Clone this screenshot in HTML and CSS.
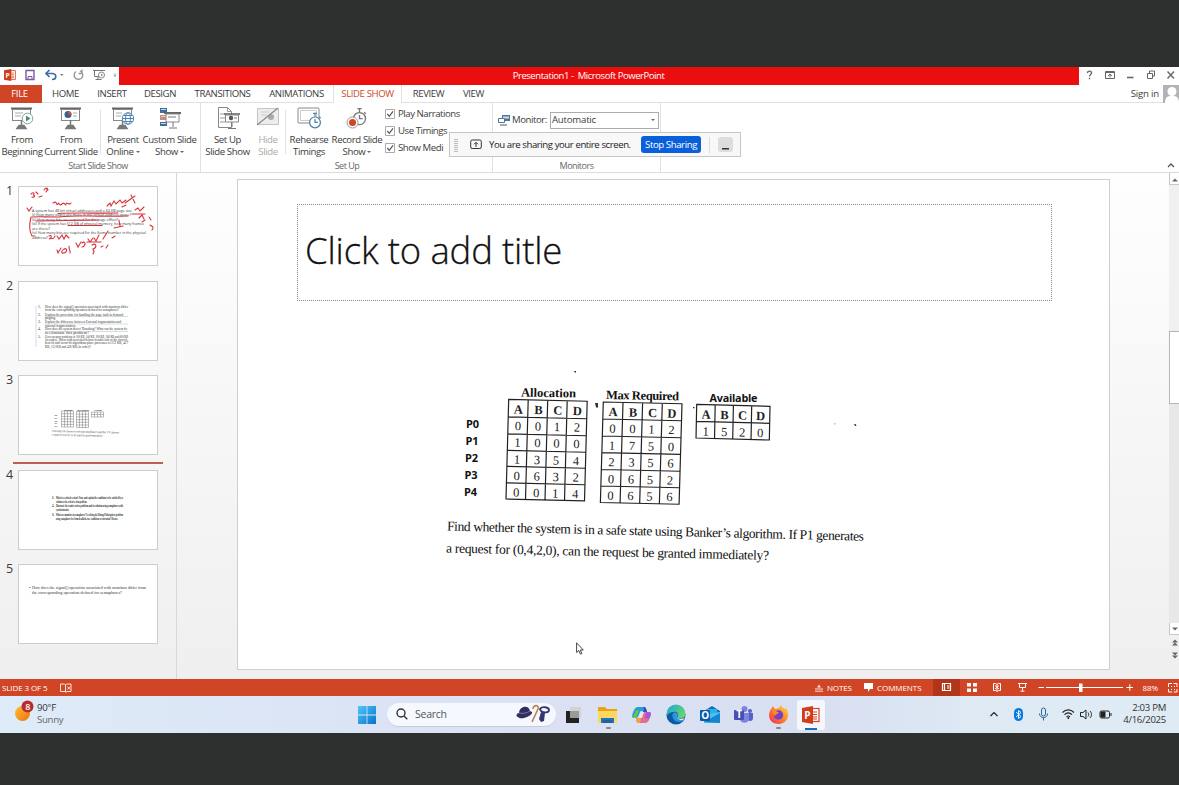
FILE: index.html
```html
<!DOCTYPE html>
<html lang="en">
<head>
<meta charset="utf-8">
<title>Presentation1 - Microsoft PowerPoint</title>
<link rel="stylesheet" href="styles.css">
</head>
<body>
<svg class="defs" width="0" height="0">
  <defs>
    <symbol id="board" viewBox="0 0 24 24">
      <path d="M1 2.5h21" stroke="#666" stroke-width="2"/><rect x="2.5" y="3.5" width="18" height="11" fill="#fff" stroke="#888"/>
      <path d="M11.500 14v7M7 22.500l2-3h5l2 3z" stroke="#777" stroke-width="1.500" fill="#777"/>
    </symbol>
    <symbol id="watch" viewBox="0 0 14 18">
      <circle cx="7" cy="11" r="5.700" fill="#fff" stroke="currentColor" stroke-width="1.300"/><path d="M5 1.500h4M7 1v4M7 7.500V11h3M11.500 5l1.500 1.500" stroke="currentColor" stroke-width="1.300" fill="none"/>
    </symbol>
    <symbol id="ppt" viewBox="0 0 18 18">
      <rect x="9" y="2.500" width="8" height="13" fill="#fff" stroke="#d14424" stroke-width="1.200"/><path d="M11 6h4M11 8.500h4M11 11h4M11 13h4" stroke="#d14424"/><path d="M0 2 11 0v18L0 16z" fill="#d03c1c"/>
      <text x="2.200" y="12.800" class="icon-letter">P</text>
    </symbol>
  </defs>
</svg>
<div class="window">
  <header class="titlebar">
    <div class="qat">
      <svg width="119" height="18" viewBox="0 0 119 18" fill="none">
        <use href="#ppt" x="4" y="2" width="12" height="12"/>
        <path d="M26 3.500h8v9h-8z" stroke="#7b5aa6" stroke-width="1.400"/><path d="M28 12.500v-3h4v3" stroke="#7b5aa6"/>
        <path d="M46 6.500h6c5 0 5 6 0 6M49.500 3l-3.500 3.500 3.500 3.500" stroke="#3b6fa8" stroke-width="1.700"/><path d="M60 7h3.500l-1.700 2z" fill="#777"/>
        <path d="M80 4a4.300 4.300 0 1 1-4 .5M82 2.500v4h-3.500" stroke="#999" stroke-width="1.400"/>
        <path d="M93 3.500h12M94.500 4v5.500h5M98 10v2.500M95.500 12.500h6" stroke="#777"/><circle cx="101.500" cy="8" r="3" fill="#fff" stroke="#888"/><path d="M101 6.500l2 1.500-2 1.500z" fill="#888"/>
        <path d="M113.500 7h3M114 8.500h2l-1 1.500z" stroke="#999" stroke-width=".7"/>
      </svg>
    </div>
    <h1 class="caption">Presentation1 -&nbsp; Microsoft PowerPoint</h1>
    <div class="controls">
      <svg width="100" height="18" viewBox="0 0 100 18" fill="none" stroke="#666">
        <path d="M8.500 6c0-2.500 4-2.500 4 0 0 1.500-2 1.500-2 3.500M10.500 10.800v1.500" stroke-width="1.400"/>
        <path d="M26.500 4.500h9v7h-9zM27 5.500h8M31 10.500V7M29 9l2-2 2 2"/>
        <path d="M48 10.500h6.500" stroke-width="1.600"/>
        <path d="M68.500 6.500h5v5h-5zM70.500 6V4h5v5H74"/>
        <path d="M88.500 4.500l6.500 7M95 4.500l-6.500 7" stroke-width="1.400"/>
      </svg>
    </div>
  </header>
  <nav class="tabs">
    <span class="tab file">FILE</span><span class="tab home">HOME</span><span class="tab insert">INSERT</span><span class="tab design">DESIGN</span><span class="tab trans">TRANSITIONS</span><span class="tab anim">ANIMATIONS</span><span class="tab active">SLIDE SHOW</span><span class="tab review">REVIEW</span><span class="tab view">VIEW</span>
    <span class="signin">Sign in</span>
    <svg width="16" height="18" viewBox="0 0 16 18"><rect width="16" height="18" fill="#b3b3b3"/><circle cx="9" cy="6.500" r="4.500" fill="#fff"/><path d="M2 18c0-5 2-6.500 5-7h4c3 .5 5 2 5 7z" fill="#fff"/></svg>
  </nav>
  <section class="ribbon">
    <div class="group start">
      <div class="tools">
        <div class="tool w45"><svg width="24" height="24" viewBox="0 0 24 24"><use href="#board"/><path d="M5 7h8M5 10h6" stroke="#aaa"/><circle cx="17.500" cy="12.500" r="5.300" fill="#fff" stroke="#7aa39b"/><path d="M16 9.500l4.500 3-4.500 3z" fill="#4b8a75"/></svg><span>From<br>Beginning</span></div>
        <div class="tool w54"><svg width="24" height="24" viewBox="0 0 24 24"><use href="#board"/><circle cx="9" cy="8.500" r="3.500" fill="#366092"/><path d="M9 8.500V5a3.500 3.500 0 0 1 3.500 3.500z" fill="#d35230"/><path d="M14 7h4M14 10h4" stroke="#aaa"/></svg><span>From<br>Current Slide</span></div>
        <i class="rule"></i>
        <div class="tool w38"><svg width="24" height="24" viewBox="0 0 24 24"><use href="#board"/><path d="M5 7h6M5 10h5" stroke="#aaa"/><g fill="#fff" stroke="#4d7fb3"><circle cx="17" cy="12.500" r="5.700"/><ellipse cx="17" cy="12.500" rx="2.500" ry="5.700"/><path d="M11.500 12.500h11M12.500 9.500h9M12.500 15.500h9" fill="none"/></g></svg><span>Present<br>Online <b class="caret"></b></span></div>
        <div class="tool w55"><svg width="24" height="24" viewBox="0 0 24 24"><path d="M2 2h7v5H2zM2 16h7v4H2z" fill="#3d6c9e"/><path d="M2 9h7v5H2z" fill="#c58b76"/><path d="M3 3.500h5M3 10.500h5M3 17.500h5" stroke="#cbd7e4"/><path d="M6 7h17" stroke="#666" stroke-width="2"/><path d="M8 8h13v8H8z" fill="#fff" stroke="#888"/><path d="M10 11h8M15 16v5M11 22h8" stroke="#777"/></svg><span>Custom Slide<br>Show <b class="caret"></b></span></div>
      </div>
      <div class="group-label">Start Slide Show</div>
    </div>
    <div class="group setup">
      <div class="tools">
        <div class="tool w52"><svg width="24" height="24" viewBox="0 0 24 24" fill="none"><path d="M2.500 1.500h9l4 4v16h-13z" fill="#fff" stroke="#888"/><path d="M11.500 1.500v4h4M4 8h5M4 12h5M4 16h5" stroke="#999"/><path d="M8 8h16" stroke="#666" stroke-width="1.600"/><path d="M9.500 9h13v7h-13z" fill="#fff" stroke="#888"/><circle cx="15" cy="12" r="2.200" fill="#555"/><path d="M18 12h3M16 16v5M12 22.500h8" stroke="#777"/></svg><span>Set Up<br>Slide Show</span></div>
        <div class="tool w29 off"><svg width="24" height="24" viewBox="0 0 24 24"><path d="M1.500 2.500h21v16h-21z" fill="#ededed" stroke="#c4c4c4"/><path d="M5 6h8M5 9h6" stroke="#ccc"/><circle cx="15" cy="11" r="3" fill="#aaa"/><path d="M1 19 22 2" stroke="#888" stroke-width="1.200"/></svg><span>Hide<br>Slide</span></div>
        <i class="rule"></i>
        <div class="tool w42"><svg width="24" height="24" viewBox="0 0 24 24"><rect x="1" y="2" width="21" height="15" rx="1" fill="#fff" stroke="#888"/><path d="M3.500 4.500h16v10h-16z" fill="none" stroke="#ccc"/><use href="#watch" x="11" y="6" width="14" height="17" class="blue"/></svg><span>Rehearse<br>Timings</span></div>
        <div class="tool w54"><svg width="24" height="24" viewBox="0 0 24 24"><use href="#watch" x="6" y="1" width="17" height="19" class="grey"/><circle cx="7.500" cy="16.500" r="5.500" fill="#fff" stroke="#999"/><circle cx="7.500" cy="16.500" r="3.500" fill="#cf4526"/></svg><span>Record Slide<br>Show <b class="caret"></b></span></div>
        <div class="checks">
          <label><svg width="10" height="10" viewBox="0 0 10 10"><path d="M.5.5h9v9h-9z" fill="#fff" stroke="#aaa"/><path d="M2.300 5l2 2.300 3.700-5" fill="none" stroke="#555" stroke-width="1.200"/></svg>Play Narrations</label>
          <label><svg width="10" height="10" viewBox="0 0 10 10"><path d="M.5.5h9v9h-9z" fill="#fff" stroke="#aaa"/><path d="M2.300 5l2 2.300 3.700-5" fill="none" stroke="#555" stroke-width="1.200"/></svg>Use Timings</label>
          <label><svg width="10" height="10" viewBox="0 0 10 10"><path d="M.5.5h9v9h-9z" fill="#fff" stroke="#aaa"/><path d="M2.300 5l2 2.300 3.700-5" fill="none" stroke="#555" stroke-width="1.200"/></svg>Show Medi</label>
        </div>
      </div>
      <div class="group-label">Set Up</div>
    </div>
    <div class="group monitors">
      <div class="monitor-row">
        <svg width="12" height="12" viewBox="0 0 12 12"><path d="M4 1h8v6H4z" fill="#54759b"/><path d="M5 2.500h6v2H5z" fill="#d5deea"/><path d="M.5 4.500h6v4h-6z" fill="#fff" stroke="#54759b"/><path d="M2 11h7" stroke="#555"/></svg>
        <span class="monitor-label">Monitor:</span><span class="select">Automatic<b class="caret"></b></span>
      </div>
      <div class="group-label">Monitors</div>
    </div>
    <svg class="collapse" width="8" height="6" viewBox="0 0 8 6"><path d="M1 5l3-3 3 3" fill="none" stroke="#555" stroke-width="1.300"/></svg>
  </section>
  <div class="share">
    <i class="grip"></i>
    <svg width="12" height="11" viewBox="0 0 12 11" fill="none" stroke="#333"><rect x=".7" y="1" width="10.600" height="8.500" rx="1.500"/><path d="M6 8V3.500M4 5.300l2-2 2 2"/></svg>
    <span class="share-text">You are sharing your entire screen.</span>
    <span class="stop">Stop Sharing</span>
    <i class="share-rule"></i>
    <span class="share-min"></span>
  </div>
  <main class="work">
    <aside class="thumbs">
      <div class="thumb"><b>1</b>
        <svg viewBox="0 0 140 80" width="140" height="80"><g class="tiny sans"><text x="14" y="25.500" textLength="100" lengthAdjust="spacingAndGlyphs">A system has 48-bit virtual addresses and a 64-KB page size</text><text x="14" y="30" textLength="99" lengthAdjust="spacingAndGlyphs">(i) How many pages are there in the virtual address space?</text><text x="14" y="34.500" textLength="86" lengthAdjust="spacingAndGlyphs">(ii) How many bits are required for the page offset?</text><text x="14" y="39" textLength="112" lengthAdjust="spacingAndGlyphs">(iii) If the system has 512 GB of physical memory, how many frames</text><text x="14" y="43.500" textLength="18" lengthAdjust="spacingAndGlyphs">are there?</text><text x="14" y="48" textLength="114" lengthAdjust="spacingAndGlyphs">(iv) How many bits are required for the frame number in the physical</text><text x="14" y="52.500" textLength="16" lengthAdjust="spacingAndGlyphs">address?</text></g>
        <g class="ink"><path d="M13 8c3-3 4 0 2 1 3 0 1 3-1 2M18 6l2 2M21 11l3-1M26 4c3-4 4 0 2 2M29 2l1 2M35 17c5-3 2 3 5 1 1-3 1 3 4 0s3 3 4 0 3 2 5-1M9 22l2 3 3-4M14 31c10-1 20 1 32-.5s30 .5 64-.5M40 27.500c20-1 40 0 60-.5M18 35l62-1M50 39.500h34M13 31c-2 8-2 14 1 19l3 0M89 20l3-3 1 3 3-5 2 3 4-4 2 3 4-3M107 17l10-7M113 9l4 8M104 21l4-2M114 28h13M117 24l3-2 2 3 4-4M121 32l3-3 2 4M131 31l2 3M124 36l3-2M132 39l3 2M134 44l1-2M101 34l1 6M96 42l9-2M31 50c4-2 2 3 0 3 4-2 4 2 6-3M39 50l2 3 3-4 2 4 2-4 3 3M39 64l1 3 3-5M46 63c3-2 4 3 0 4s-2-4 1-4M51 60c0 7 2 4 1 7M58 57l2 4 3-5M64 57c4-3 4 3 0 4M69 56h14M70 53l2 3 3-4M76 52l2 3 3-6M74 59c5-3 5 3 1 4 1 4 2 1 0 5M85 53l5-8M83 61l2-1M88 62l2-3M94 52l3-2"/></g></svg>
      </div>
      <div class="thumb"><b>2</b>
        <svg viewBox="0 0 140 80" width="140" height="80"><g class="tiny serif"><text x="20" y="26.500">1.</text><text x="27" y="26.500" textLength="83" lengthAdjust="spacingAndGlyphs">How does the signal() operation associated with monitors differ</text><text x="27" y="30.300" textLength="74" lengthAdjust="spacingAndGlyphs">from the corresponding operation defined for semaphores?</text><text x="20" y="34.500">2.</text><text x="27" y="34.500" textLength="78" lengthAdjust="spacingAndGlyphs">Explain the procedure for handling the page fault in demand</text><text x="27" y="38.200" textLength="11" lengthAdjust="spacingAndGlyphs">paging.</text><text x="20" y="42">3.</text><text x="27" y="42" textLength="76" lengthAdjust="spacingAndGlyphs">Explain the difference between External fragmentation and</text><text x="27" y="45.500" textLength="31" lengthAdjust="spacingAndGlyphs">internal fragmentation.</text><text x="20" y="49.300">4.</text><text x="27" y="49.300" textLength="82" lengthAdjust="spacingAndGlyphs">How does the system detect Thrashing? What can the system do</text><text x="27" y="52.800" textLength="44" lengthAdjust="spacingAndGlyphs">to eliminate this problem?</text><text x="20" y="56.600">5.</text><text x="27" y="56.600" textLength="83" lengthAdjust="spacingAndGlyphs">Given memory partitions of 100 KB, 500 KB, 200 KB, 300 KB and 600 KB</text><text x="27" y="59.900" textLength="83" lengthAdjust="spacingAndGlyphs">(in order). Show with neat sketch how would each of the first-fit,</text><text x="27" y="63.200" textLength="83" lengthAdjust="spacingAndGlyphs">best-fit and worst-fit algorithms place processes of 212 KB, 417</text><text x="27" y="66.500" textLength="46" lengthAdjust="spacingAndGlyphs">KB, 112 KB and 426 KB (in order)?</text></g><path d="M18 25v41M47 28h9M27 35.500h83M27 43h83M27 50.500h83" stroke="#9aa3b5" stroke-width=".4"/></svg>
      </div>
      <div class="thumb"><b>3</b>
        <svg viewBox="0 0 140 80" width="140" height="80"><g stroke="#777" stroke-width=".5" fill="none"><path d="M43.500 36h12v16h-12zM46.500 36v16M49.500 36v16M52.500 36v16M43.500 38.700h12M43.500 41.400h12M43.500 44h12M43.500 46.700h12M43.500 49.400h12M58.500 36.500h12v16h-12zM61.500 36.500v16M64.500 36.500v16M67.500 36.500v16M58.500 39.200h12M58.500 41.900h12M58.500 44.600h12M58.500 47.300h12M58.500 50h12M73.500 37h12v5h-12zM76.500 37v5M79.500 37v5M82.500 37v5M73.500 39.500h12"/></g><g class="micro bold serif"><text x="45.500" y="35.500" textLength="9" lengthAdjust="spacingAndGlyphs">Allocation</text><text x="59" y="36" textLength="12" lengthAdjust="spacingAndGlyphs">Max Required</text><text x="76" y="36.300" textLength="8" lengthAdjust="spacingAndGlyphs">Available</text><text x="36.500" y="41.300">P0</text><text x="36.500" y="44">P1</text><text x="36.500" y="46.700">P2</text><text x="36.500" y="49.400">P3</text><text x="36.500" y="52.100">P4</text></g><g class="small serif" transform="rotate(1.300 34 57)"><text x="34" y="57" textLength="67" lengthAdjust="spacingAndGlyphs">Find whether the system is in a safe state using Banker’s algorithm. If P1 generates</text><text x="34" y="60.700" textLength="51" lengthAdjust="spacingAndGlyphs">a request for (0,4,2,0), can the request be granted immediately?</text></g></svg>
      </div>
      <div class="insertion"></div>
      <div class="thumb after"><b>4</b>
        <svg viewBox="0 0 140 80" width="140" height="80"><g class="small bold serif"><text x="34" y="28.500">1.</text><text x="38" y="28.500" textLength="67" lengthAdjust="spacingAndGlyphs">What is a critical section? State and explain the conditions to be satisfied by a</text><text x="38" y="32.700" textLength="31" lengthAdjust="spacingAndGlyphs">solution to the critical section problem.</text><text x="34" y="37">2.</text><text x="38" y="37" textLength="67" lengthAdjust="spacingAndGlyphs">Illustrate the reader writer problem and its solution using semaphores with</text><text x="38" y="41.300" textLength="13" lengthAdjust="spacingAndGlyphs">synchronization.</text><text x="34" y="45.800">3.</text><text x="38" y="45.800" textLength="67" lengthAdjust="spacingAndGlyphs">What are monitors in semaphores? Is solving the Dining Philosophers problem</text><text x="38" y="50" textLength="62" lengthAdjust="spacingAndGlyphs">using semaphores free from deadlock, race conditions or starvation? Discuss.</text></g></svg>
      </div>
      <div class="thumb"><b>5</b>
        <svg viewBox="0 0 140 80" width="140" height="80"><g class="tiny serif big"><text x="11" y="25">•</text><text x="14" y="25" textLength="114" lengthAdjust="spacingAndGlyphs">How does the signal() operation associated with monitors differ from</text><text x="14" y="29.700" textLength="90" lengthAdjust="spacingAndGlyphs">the corresponding operation defined for semaphores?</text></g></svg>
      </div>
    </aside>
    <section class="stage">
      <article class="slide">
        <div class="title-box">Click to add title</div>
        <svg class="scan" viewBox="430 360 470 215" width="470" height="215">
          <g class="p"><text x="466" y="428" textLength="13">P0</text><text x="465.500" y="445" textLength="13">P1</text><text x="465" y="462" textLength="13">P2</text><text x="464.500" y="478.500" textLength="13">P3</text><text x="464" y="495.500" textLength="13">P4</text></g>
          <g class="head"><text transform="rotate(1 521 397)" x="521" y="396.500" textLength="55">Allocation</text><text transform="rotate(1 606 399)" x="606" y="399" textLength="73">Max Required</text><text class="avail" x="709.500" y="402" textLength="48">Available</text></g>
          <g transform="matrix(1 .025 -.027 1 508.700 399.300)"><path class="grid" d="M0 0h78.500v99.700H0zM19.500 0v99.700M39 0v99.700M58.500 0v99.700M0 17.500h78.500M0 34.500h78.500M0 51h78.500M0 67h78.500M0 83.500h78.500"/>
            <g class="cells"><text class="hd" x="10 30 49.500 69" y="14">ABCD</text><text x="10 30 49 69" y="30.500">0012</text><text x="10 30 49 69" y="47">1000</text><text x="10 30 49 69" y="64">1354</text><text x="10 30 49 69" y="80.500">0632</text><text x="10 30 49 69" y="97">0014</text></g></g>
          <g transform="matrix(1 .022 -.029 1 603.300 402)"><path class="grid" d="M0 0h78.700v100.500H0zM19.700 0v100.500M39.300 0v100.500M59 0v100.500M0 17h78.700M0 34h78.700M0 50.700h78.700M0 67.500h78.700M0 84h78.700"/>
            <g class="cells"><text class="hd" x="10 30 49.500 69" y="14">ABCD</text><text x="10 30 49 69" y="30.500">0012</text><text x="10 30 49 69" y="47.500">1750</text><text x="10 30 49 69" y="64">2356</text><text x="10 30 49 69" y="81">0652</text><text x="10 30 49 69" y="97.500">0656</text></g></g>
          <g transform="matrix(1 .027 -.02 1 696.700 404.300)"><path class="grid" d="M0 0h73.300v33.700H0zM18.500 0v33.700M36.700 0v33.700M55 0v33.700M0 17h73.300"/>
            <g class="cells"><text class="hd" x="9.500 28 46 64" y="14">ABCD</text><text x="9.500 28 46 64" y="31">1520</text></g></g>
          <g class="body"><text transform="rotate(1.400 447 530.500)" x="447" y="530.500" textLength="417">Find whether the system is in a safe state using Banker’s algorithm. If P1 generates</text><text transform="rotate(1.300 446 552.500)" x="446" y="552.500" textLength="323">a request for (0,4,2,0), can the request be granted immediately?</text></g>
          <path d="M595 403h3v4.500h-2zM573.500 371h2.500v2M693 407h1.500v1.200H693zM854 424h1.500l1 2h-1.500z" fill="#333"/><path d="M834 423h1.500v1.500H834z" fill="#7de0b5"/>
        </svg>
        <svg class="cursor" width="8" height="13" viewBox="0 0 8 13"><path d="M.6.8v9.700l2.200-2 1.600 3.700 1.500-.7L4.300 8h3z" fill="#fff" stroke="#333" stroke-width=".9"/></svg>
      </article>
    </section>
    <div class="scroll">
      <span class="arrow"><svg width="9" height="12" viewBox="0 0 9 12"><path d="M2 8.500h6L5 5.500z" fill="#666"/></svg></span>
      <span class="track"></span><span class="handle"></span><span class="track low"></span>
      <span class="arrow"><svg width="9" height="12" viewBox="0 0 9 12"><path d="M2 4.500h6L5 7.500z" fill="#666"/></svg></span>
      <svg width="9" height="44" viewBox="0 0 9 44"><path d="M3 7.500h6l-3-3zM3 10.500h6l-3-3zM3 17.500h6l-3 3zM3 20.500h6l-3 3z" fill="#666"/></svg>
    </div>
  </main>
  <footer class="status">
    <span class="count">SLIDE 3 OF 5</span>
    <svg width="12" height="10" viewBox="0 0 12 10" fill="none" stroke="#fbe3dc"><path d="M.5 1h4l1 1 1-1h4.500v7.500H7l-1 .8-1-.8H.500zM5.500 2v7M7.500 3.500l2.500 3M10 3.500l-2.500 3"/></svg>
    <span class="push"></span>
    <svg width="8" height="8" viewBox="0 0 8 8" stroke="#fbe3dc"><path d="M0 5h8M0 7.200h8"/><path d="M2 3.500L4 .5l2 3z" fill="#fbe3dc" stroke="none"/></svg><span class="notes">NOTES</span>
    <svg width="9" height="9" viewBox="0 0 9 9"><path d="M0 0h9v6H6L4 9V6H0z" fill="#fff"/></svg><span class="comments">COMMENTS</span>
    <svg class="views" width="257" height="17" viewBox="0 0 257 17" fill="none" stroke="#fff"><rect x="11" width="27" height="17" fill="#b2351a" stroke="none"/><path d="M20.500 4.500h8v7h-8zM22.500 5v6M25 7h2.500M25 9h2.500" stroke-width="1.200"/><path d="M45 4h4v3.500h-4zM51 4h4v3.500h-4zM45 9.500h4V13h-4zM51 9.500h4V13h-4z" fill="#fff" stroke="none"/><path d="M71.500 4.500h2l1.500 1 1.500-1h2v7h-2l-1.500 1-1.500-1h-2zM75 5.500v6.500M73 6.500l4 3.500M77 6.500L73 10"/><path d="M96 4.500h9M97.500 5v3.500h6V5M100.500 9v3M98.500 12.200h4"/><path d="M116.500 8.500h5.500M124 8.500h77M204.500 8.500h6.500M207.800 5.200v6.600" stroke-width="1"/><path d="M157 4.500h3.500v8.500H157z" fill="#fff" stroke="none"/><text x="220.500" y="11.500" textLength="15.500">88%</text><path d="M246.500 8V4.500h3.500M251.500 4.500h3.500V8M255 10v3h-3.500M250 13h-3.500v-3M249 7l1 1M253 7l-1 1M249 11l1-1M253 11l-1-1"/></svg>
  </footer>
  <div class="taskbar">
    <div class="weather">
      <svg width="20" height="22" viewBox="0 0 20 22"><defs><linearGradient id="sun" x2="1" y2="1"><stop stop-color="#ffc233"/><stop offset="1" stop-color="#ee6f10"/></linearGradient></defs><circle cx="7.500" cy="13.500" r="7.500" fill="url(#sun)"/><circle cx="12.500" cy="6.500" r="6" fill="#b92c2c"/><text x="10.300" y="9.700" class="badge">8</text></svg>
      <div class="forecast"><span>90°F</span><span class="dim">Sunny</span></div>
    </div>
    <div class="apps">
      <svg width="18" height="18" viewBox="0 0 18 18"><defs><linearGradient id="win" x2="1" y2="1"><stop stop-color="#4cc7f5"/><stop offset="1" stop-color="#0873cf"/></linearGradient></defs><path d="M0 0h8.600v8.600H0zM9.400 0H18v8.600H9.400zM0 9.400h8.600V18H0zM9.400 9.400H18V18H9.400z" fill="url(#win)"/></svg>
      <div class="search"><svg width="12" height="12" viewBox="0 0 12 12" fill="none" stroke="#333" stroke-width="1.400"><circle cx="5" cy="5" r="4"/><path d="M8 8l3.300 3.300"/></svg><span>Search</span>
        <svg width="35" height="18" viewBox="0 0 35 18" fill="none"><path d="M2 12c-3-1-1-4 1-4C3 1 13-1 14 6l2 1c1 2-4 5-8 6-3 .7-5 0-6-1z" fill="#302f60"/><path d="M3 8c4 1 8 0 11-2" stroke="#7a77a8"/><path d="M17 4c0-5 7-4 5 0l-6 13" stroke="#b98252" stroke-width="1.600"/><path d="M24 4c2-3 9-2 9 1s-5 3-8 1z" stroke="#33366e" stroke-width="1.800"/><path d="M25 7l4 1-1 8-3 1-2-3z" fill="#33366e"/></svg>
      </div>
      <div class="app"><svg width="18" height="18" viewBox="0 0 18 18"><path d="M1 5h13v12H1z" fill="#222"/><path d="M5 1h11v11H5z" fill="#d2d2d2"/><path d="M5 5h9v7H5z" fill="#9a9a9a"/></svg></div>
      <div class="app run"><svg width="20" height="18" viewBox="0 0 20 18"><path d="M0 1h7l2 2h10v13H0z" fill="#e8a317"/><path d="M0 5h19v12H0z" fill="#ffd75e"/><path d="M3 12h13v5H3z" fill="#1676c8"/><path d="M5 14h9v3H5z" fill="#2b5e95"/></svg></div>
      <div class="app"><svg width="20" height="18" viewBox="0 0 20 18"><path d="M6 1h6c2 0 2 2 3 5L9 5C7 6 7 12 4 12H2C-1 12 0 9 2 4c1-2 2-3 4-3z" fill="#279fd6"/><path d="M1 10c1-1 2-2 3-6l3 1-3 7c-2 0-4 0-3-2z" fill="#68c74a"/><path d="M12 1c2 0 2 2 3 5h2c3 0 2 3 0 8-1 2-2 3-4 3H7c-2 0-3-2-3-5h2c3 0 3-5 6-7z" fill="#e76b8c"/><path d="M11 1c3 0 3 1 4 5h-4l1-3z" fill="#304fc4"/><path d="M14 6h3c3 0 2 3 0 7l-4-1z" fill="#a658d7"/><path d="M4 12h5l-1 5c-3 0-4-2-4-5z" fill="#f0a33b"/><path d="M9 6h3l-2 6H7z" fill="#e4e5f5"/></svg></div>
      <div class="app"><svg width="20" height="20" viewBox="0 0 20 20"><defs><linearGradient id="edge" x2="1" y2=".5"><stop stop-color="#18a6df"/><stop offset="1" stop-color="#65d46e"/></linearGradient></defs><circle cx="10" cy="10" r="9.500" fill="#0c59a4"/><path d="M.5 9A9.500 9.500 0 0 1 19.500 9c0 5-6 5-8 3 2-4-1-6-4-5C4 7 1 9 .5 13z" fill="url(#edge)"/><path d="M7 8c-2 4 1 9 6 9 2 0 4-1 5-2-5 0-8-3-6-6-1-2-3-2-5-1z" fill="#2b94dd"/><path d="M11 9c-2 4 3 6 8 4l-2 2c-4 1-8-3-6-6z" fill="#dce7f7"/></svg></div>
      <div class="app"><svg width="20" height="18" viewBox="0 0 20 18"><path d="M4 5l8-5 8 5v12H4z" fill="#0b6fbd"/><path d="M7 3h10v8H7z" fill="#32aee6"/><path d="M4 9l16-3v11H4z" fill="#43c4f4"/><path d="M4 16L20 7v10z" fill="#1585ce"/><rect y="4" width="10" height="11" rx="1" fill="#0c5aa7"/><text x="1.300" y="12.800" class="icon-letter">O</text></svg></div>
      <div class="app"><svg width="20" height="18" viewBox="0 0 20 18"><circle cx="16" cy="5" r="2" fill="#5860c5"/><path d="M13 7h6v5c0 3-3 4-5 2z" fill="#5860c5"/><circle cx="10.500" cy="3" r="3" fill="#7b83e5"/><path d="M6 7h9v6c0 5-9 5-9 0z" fill="#7b83e5"/><rect y="4" width="10" height="10" rx="1" fill="#4850b3"/><text x="2.200" y="12" class="icon-letter">T</text></svg></div>
      <div class="app run"><svg width="19" height="19" viewBox="0 0 19 19"><defs><linearGradient id="fox" x1="1" x2="0" y2="1"><stop stop-color="#ffe14a"/><stop offset=".5" stop-color="#ff8125"/><stop offset="1" stop-color="#f0285d"/></linearGradient></defs><path d="M2 4l2-3 2 3 4-1 2-3c1 3 3 3 4 4l1-1c5 7 1 16-7.500 16C0 19-2 10 2 4z" fill="url(#fox)"/><circle cx="9.500" cy="10" r="4.700" fill="#7042ca"/><path d="M4 5c3 0 3 2 6 2-1 2-3 2-4 4-1-1-2-4-2-6z" fill="#ff8a22"/></svg></div>
      <div class="app current"><svg width="18" height="18"><use href="#ppt"/></svg></div>
    </div>
    <div class="tray">
      <svg width="125" height="22" viewBox="0 0 125 22" fill="none" stroke="#222"><path d="M2.500 13L6 9.500 9.500 13" stroke-width="1.200"/><rect x="26" y="5" width="9" height="13" rx="4.500" fill="#0879e0" stroke="none"/><path d="M28 9l5 4.500-2.500 2V7.500l2.500 2L28 14" stroke="#fff" stroke-width=".9"/><rect x="53.500" y="5" width="4" height="8" rx="2" stroke="#2c6498"/><path d="M51.500 10.500c0 5.500 8 5.500 8 0M55.500 15v2.500" stroke="#2c6498"/><path d="M74.500 9.500c3.500-3.500 8-3.500 11.500 0M76.500 11.700c2.500-2.500 5-2.500 7.500 0M78.500 13.800c1.500-1.300 2-1.300 3.500 0" stroke-width="1.100"/><circle cx="80.300" cy="15" r="1" fill="#222" stroke="none"/><path d="M92.500 9.500h2.500l3-2.500v9l-3-2.500h-2.500zM100 9.500c1 1.500 1 2.500 0 4M102 8c2 2 2 5 0 7"/><rect x="112" y="8" width="9.500" height="7" rx="1.500"/><path d="M113 9h4v5h-4z" fill="#222"/><path d="M123 10v3"/></svg>
      <div class="clock"><span>2:03 PM</span><span>4/16/2025</span></div>
    </div>
  </div>
</div>
</body>
</html>
```
FILE: styles.css
```css
* { box-sizing: border-box; }
body { margin: 0; width: 1179px; height: 785px; background: #2e302f; overflow: hidden; font: 9.600px/12px "Open Sans", "Noto Sans", sans-serif; color: #3c3c3c; }
svg { display: block; flex: none; overflow: visible; }
.defs { position: absolute; }
.window { position: relative; padding-top: 67px; display: flex; flex-direction: column; }

.titlebar { display: flex; height: 18px; background: #fff; }
.qat { width: 119px; }
.caption { flex: 1; margin: 0; padding-right: 21px; background: #ea0e0e; color: #fff; font-size: 9.500px; font-weight: 400; line-height: 18px; text-align: center; letter-spacing: -.44px; }
.controls { width: 100px; }

.tabs { display: flex; height: 18px; background: #fff; line-height: 18px; }
.tab { border-bottom: 1px solid #e1e1e1; text-align: center; letter-spacing: -.4px; white-space: nowrap; }
.file { width: 42px; padding-right: 3px; background: #d04525; color: #fff; border: 0; }
.home { width: 47px; }
.insert { width: 46px; }
.design { width: 50px; }
.trans { width: 75px; }
.anim { width: 73px; }
.active { width: 69px; border: solid #e1e1e1; border-width: 0 1px; color: #cc4a29; }
.review { width: 53px; }
.view { width: 37px; }
.signin { flex: 1; border-bottom: 1px solid #e1e1e1; text-align: right; padding-right: 4px; letter-spacing: -.2px; }

.ribbon { display: flex; position: relative; height: 70px; background: #fff; border-bottom: 1px solid #dcdcdc; }
.group { display: flex; flex-direction: column; justify-content: space-between; border-right: 1px solid #e1e1e1; padding: 3px 0 0; }
.start { width: 201px; }
.setup { width: 292px; padding-left: 1px; }
.monitors { width: 168px; }
.group-label { text-align: center; font-size: 9px; line-height: 12px; color: #666; letter-spacing: -.5px; }
.start .group-label { padding-right: 4px; }
.tools { display: flex; height: 53px; }
.tool { display: flex; flex-direction: column; align-items: center; gap: 4px; text-align: center; white-space: nowrap; letter-spacing: -.38px; line-height: 12px; }
.tool span { display: block; }
.off { color: #aaa; }
.w29 { width: 30px; }
.w38 { width: 40px; }
.w42 { width: 42px; }
.w45 { width: 44px; }
.w52 { width: 51px; }
.w54 { width: 54px; }
.w55 { width: 53px; }
.rule { width: 1px; height: 44px; margin: 4px 2px; background: #e1e1e1; }
.blue { color: #4d7fa8; }
.grey { color: #777; }
.caret { display: inline-block; border: 2px solid transparent; border-top-color: #666; border-bottom: 0; vertical-align: 2px; }
.checks { display: flex; flex-direction: column; gap: 5px; padding: 2px 0 0 1px; white-space: nowrap; letter-spacing: -.45px; }
.checks label { display: flex; align-items: center; gap: 3px; height: 12px; }
.monitor-row { display: flex; align-items: center; height: 28px; padding-left: 5px; gap: 2px; }
.monitor-label { width: 36px; letter-spacing: -.45px; }
.select { display: flex; align-items: center; justify-content: space-between; width: 109px; height: 17px; padding: 0 3px 0 1px; border: 1px solid #ababab; letter-spacing: -.2px; }
.collapse { position: absolute; right: 4px; bottom: 4px; }

.share { position: absolute; left: 449px; top: 132px; display: flex; align-items: center; width: 292px; height: 25px; padding-left: 4px; background: #f8f8f8; border: 1px solid #c6c6c6; color: #222; white-space: nowrap; }
.grip { width: 4px; height: 14px; margin-right: 12px; background: repeating-linear-gradient(#f8f8f8 0 1px, #bbb 1px 2px); }
.share-text { width: 142px; margin-left: 7px; letter-spacing: -.42px; }
.stop { width: 60px; height: 17px; margin-left: 10px; border-radius: 3px; background: #0a5fdb; color: #fff; text-align: center; line-height: 17px; letter-spacing: -.4px; }
.share-rule { width: 1px; height: 16px; margin: 0 8px; background: #ddd; }
.share-min { width: 15px; height: 15px; border-radius: 3px; background: linear-gradient(#333, #333) 50% 11px / 7px 1.500px no-repeat #ddd; }

.work { display: flex; height: 506px; background: linear-gradient(#fefefe, #efefef); }
.thumbs { width: 177px; padding-top: 13px; border-right: 1px solid #d8d8d8; }
.thumb { display: flex; height: 81px; margin-bottom: 13.500px; }
.thumb b { width: 18px; padding-left: 6px; font-size: 12.500px; font-weight: 400; line-height: 10px; }
.thumb svg { outline: 1px solid #cdcdcd; outline-offset: -1px; background: #fff; }
.insertion { height: 2px; margin: -7.500px 13px 5.500px; background: #bd604f; }
.tiny { font-size: 3.900px; fill: #333; }
.small { font-size: 3.200px; fill: #222; }
.micro { font-size: 2.500px; fill: #222; }
.big { font-size: 4.500px; }
.sans { font-family: "Open Sans", sans-serif; }
.serif { font-family: "Liberation Serif", serif; }
.bold { font-weight: 700; }
.ink { fill: none; stroke: #d5333c; stroke-width: 1.100; stroke-linecap: round; }

.stage { width: 992px; padding: 6px 0 0 60px; }
.slide { position: relative; width: 873px; height: 491px; padding: 24px 58px 0 59px; background: #fff; border: 1px solid #cfcfcf; }
.title-box { width: 755px; height: 97px; padding-left: 7px; border: 1px dotted #8a8a8a; color: #111; font-size: 36.500px; font-weight: 300; line-height: 90px; letter-spacing: -.15px; white-space: nowrap; -webkit-text-stroke: .3px #111; }
.scan { position: absolute; left: 192px; top: 180px; }
.cursor { position: absolute; left: 338px; top: 462px; }
.p { font: 700 11px "Open Sans", sans-serif; fill: #111; }
.head { font: 700 12.500px "Liberation Serif", serif; fill: #111; }
.avail { font: 700 10.800px "Open Sans", sans-serif; }
.grid { fill: none; stroke: #222; stroke-width: 1.200; }
.cells { font: 12.500px "Liberation Serif", serif; fill: #222; text-anchor: middle; }
.hd { font-weight: 700; }
.body { font: 13.500px "Liberation Serif", serif; fill: #111; }

.scroll { display: flex; flex-direction: column; width: 10px; }
.arrow { height: 12px; background: #fff; border: solid #c8c8c8; border-width: 0 0 1px 1px; }
.track { height: 146px; background: #f0f0f0; }
.handle { height: 73px; background: #fff; border: solid #b5b5b5; border-width: 1px 0 1px 1px; }
.low { height: 220px; background: #e8e8e8; }

.status { display: flex; align-items: center; height: 17px; background: #d04525; color: #fff; font-size: 8px; line-height: 17px; white-space: nowrap; }
.count { width: 60px; padding-left: 2px; letter-spacing: -.1px; }
.push { flex: 1; }
.notes { width: 41px; padding-left: 4px; letter-spacing: -.15px; }
.comments { width: 49px; padding-left: 4px; letter-spacing: -.05px; }
.views text { font-size: 8px; fill: #fff; stroke: none; }

.taskbar { display: grid; grid-template-columns: 358px 1fr 191px; height: 37px; background: linear-gradient(90deg, #deebf8, #dbe3f5 35%, #d8dff1 70%, #dee9f4 82%, #deebf4); color: #333; }
.weather { display: flex; padding: 4px 0 0 15px; gap: 2px; }
.forecast { display: flex; flex-direction: column; padding-top: 2px; font-size: 9.600px; letter-spacing: -.3px; }
.dim { color: #666; }
.badge { font-size: 9px; fill: #fff; font-weight: 600; }
.apps { display: flex; align-items: center; }
.search { display: flex; align-items: center; width: 169px; height: 24px; margin: 0 1px 0 11px; padding: 0 5px 0 9px; gap: 7px; border-radius: 12px; background: #f5f8fe; border-bottom: 1px solid #c5cbd8; color: #555; font-size: 10.500px; letter-spacing: -.25px; }
.search span { flex: 1; }
.app { position: relative; display: grid; place-items: center; width: 34px; height: 30px; }
.run::after { content: ""; position: absolute; left: 15px; bottom: 1px; width: 5px; height: 2px; border-radius: 1px; background: #888; }
.current { width: 28px; margin-left: 2px; border-radius: 3px; background: #f6f7fc; }
.current::after { content: ""; position: absolute; left: 8px; bottom: 0; width: 12px; height: 2px; background: #1d6cb5; }
.icon-letter { font: 700 10px "Open Sans", sans-serif; fill: #fff; }
.tray { display: flex; justify-content: space-between; padding: 7px 13px 0 0; }
.clock { display: flex; flex-direction: column; margin-top: -1px; text-align: right; font-size: 9.600px; line-height: 12px; letter-spacing: -.3px; }
```
